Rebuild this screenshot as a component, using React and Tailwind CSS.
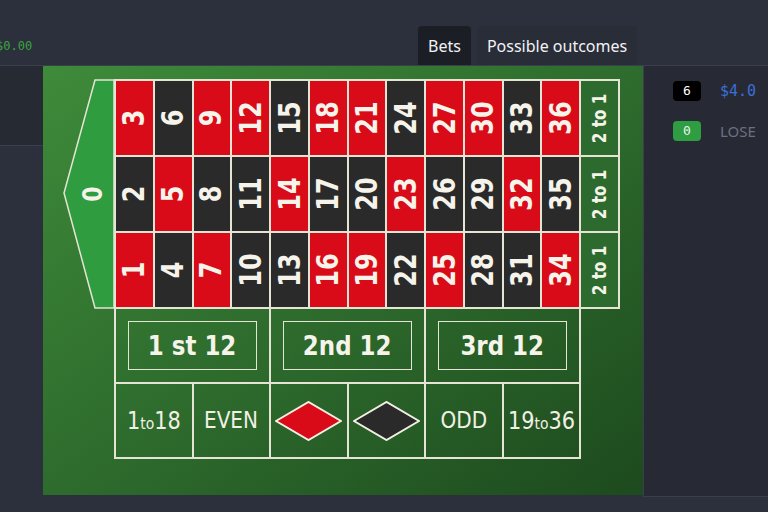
import React from 'react';

const RED = [1, 3, 5, 7, 9, 12, 14, 16, 18, 19, 21, 23, 25, 27, 30, 32, 34, 36];
const LINE = '#e6e4d4';

// rows of the number grid, top to bottom
const rows = [3, 2, 1].map((start) =>
  Array.from({ length: 12 }, (_, i) => start + i * 3)
);

const NumberCell = ({ n }) => (
  <div
    className={`flex items-center justify-center ${
      RED.includes(n) ? 'bg-[#d90b18]' : 'bg-[#2a2a2a]'
    }`}
  >
    <span className="-rotate-90 scale-x-[0.8] font-['DejaVu_Sans',sans-serif] font-bold text-[30px] leading-none text-[#f6f4ea] whitespace-nowrap">
      {n}
    </span>
  </div>
);

const ColumnBet = () => (
  <div className="flex items-center justify-center bg-[#2c6b2d]">
    <span className="-rotate-90 scale-x-[0.8] font-['DejaVu_Sans',sans-serif] font-bold text-[19px] leading-none text-[#f6f4ea] whitespace-nowrap">
      2 to 1
    </span>
  </div>
);

const Diamond = ({ fill }) => (
  <svg width="67" height="40" viewBox="0 0 67 40">
    <polygon points="1,20 33.5,1 66,20 33.5,39" fill={fill} stroke="#f2f0e4" strokeWidth="2" />
  </svg>
);

const Small = ({ big1, big2 }) => (
  <span className="scale-x-[0.87] font-['DejaVu_Sans',sans-serif] text-[#f2f0e4] whitespace-nowrap leading-none">
    <span className="text-[24px]">{big1}</span>
    <span className="text-[16px]">to</span>
    <span className="text-[24px]">{big2}</span>
  </span>
);

const OutsideText = ({ children }) => (
  <span className="scale-x-[0.87] font-['DejaVu_Sans',sans-serif] text-[23px] leading-none text-[#f2f0e4] whitespace-nowrap">
    {children}
  </span>
);

const RouletteTable = () => (
  <div className="flex items-start">
    {/* Zero */}
    <div className="relative w-[51px] h-[230px] flex items-center justify-center pl-[10px]">
      <svg className="absolute inset-0" width="51" height="230" viewBox="0 0 51 230">
        <polygon points="32,1 51,1 51,229 32,229 1,114" fill="#2e9c3f" stroke={LINE} strokeWidth="1.5" />
      </svg>
      <span className="relative -rotate-90 scale-x-[0.85] font-['DejaVu_Sans',sans-serif] font-bold text-[26px] leading-none text-[#f6f4ea]">
        0
      </span>
    </div>

    <div className="flex flex-col">
      {/* Numbers */}
      <div className="w-[506px] h-[230px] grid grid-cols-13 grid-rows-3 gap-[2px] p-[2px] bg-[#e6e4d4]">
        {rows.map((row, r) => (
          <React.Fragment key={r}>
            {row.map((n) => (
              <NumberCell key={n} n={n} />
            ))}
            <ColumnBet />
          </React.Fragment>
        ))}
      </div>

      {/* Outside bets */}
      <div className="w-[467px] border-l-2 border-[#e6e4d4]">
        <div className="grid grid-cols-3">
          {['1 st 12', '2nd 12', '3rd 12'].map((label) => (
            <div key={label} className="h-[75px] border-r-2 border-b-2 border-[#e6e4d4] pl-[12px] pt-[12px]">
              <div className="w-[129px] h-[49px] border-[1.5px] border-[#e6e4d4] flex items-center justify-center">
                <span className="scale-x-[0.85] font-['DejaVu_Sans',sans-serif] font-bold text-[27px] leading-none text-[#f6f4ea] whitespace-nowrap">
                  {label}
                </span>
              </div>
            </div>
          ))}
        </div>
        <div className="grid grid-cols-6">
          <div className="h-[75px] border-r-2 border-b-2 border-[#e6e4d4] flex items-center justify-center">
            <Small big1="1" big2="18" />
          </div>
          <div className="h-[75px] border-r-2 border-b-2 border-[#e6e4d4] flex items-center justify-center">
            <OutsideText>EVEN</OutsideText>
          </div>
          <div className="h-[75px] border-r-2 border-b-2 border-[#e6e4d4] flex items-center justify-center">
            <Diamond fill="#d90b18" />
          </div>
          <div className="h-[75px] border-r-2 border-b-2 border-[#e6e4d4] flex items-center justify-center">
            <Diamond fill="#2a2a2a" />
          </div>
          <div className="h-[75px] border-r-2 border-b-2 border-[#e6e4d4] flex items-center justify-center">
            <OutsideText>ODD</OutsideText>
          </div>
          <div className="h-[75px] border-r-2 border-b-2 border-[#e6e4d4] flex items-center justify-center">
            <Small big1="19" big2="36" />
          </div>
        </div>
      </div>
    </div>
  </div>
);

const App = () => {
  return (
    <div className="w-[768px] h-[512px] overflow-hidden bg-[#2c303d] font-['Noto_Sans',sans-serif]">
      {/* Header */}
      <div className="h-[66px] flex items-end border-b border-[#3a3f4c]">
        <div className="w-[418px] h-[39px] flex items-center">
          <span className="-ml-[4px] font-['DejaVu_Sans_Mono',monospace] text-[12px] text-[#38a53c]">
            $0.00
          </span>
        </div>
        <div className="flex gap-[6px]">
          <div className="h-[39px] px-[10px] flex items-center rounded-t-[4px] bg-[#1c1e25] text-[16px] text-[#f2f2f5]">
            Bets
          </div>
          <div className="h-[39px] px-[10px] flex items-center rounded-t-[4px] bg-[#292d38] text-[16px] text-[#f2f2f5]">
            Possible outcomes
          </div>
        </div>
      </div>

      {/* Body */}
      <div className="flex">
        <div className="w-[43px]">
          <div className="h-[80px] bg-[#262a33] border-b border-[#3a3f4c]" />
        </div>

        <div className="w-[600px] h-[429px] bg-linear-to-br from-[#3e8b3a] via-[#2e6c2d] to-[#1d4a1e] pt-[13px] pl-[20px]">
          <RouletteTable />
        </div>

        <div className="w-[125px] h-[431px] bg-[#272a34] border-l border-b border-[#3b3f4b] pl-[29px] pt-[15px] flex flex-col gap-[20px]">
          <div className="flex items-center h-[20px]">
            <div className="w-[28px] h-[20px] rounded-[4px] bg-black flex items-center justify-center font-['DejaVu_Sans_Mono',monospace] text-[13px] text-white">
              6
            </div>
            <span className="ml-[19px] font-['DejaVu_Sans_Mono',monospace] text-[15px] text-[#3a6fd6]">
              $4.0
            </span>
          </div>
          <div className="flex items-center h-[20px]">
            <div className="w-[28px] h-[20px] rounded-[4px] bg-[#2f9d42] flex items-center justify-center font-['DejaVu_Sans_Mono',monospace] text-[13px] text-[#e8f4ea]">
              0
            </div>
            <span className="ml-[19px] text-[15px] text-[#6b7080]">LOSE</span>
          </div>
        </div>
      </div>
    </div>
  );
};

export default App;
